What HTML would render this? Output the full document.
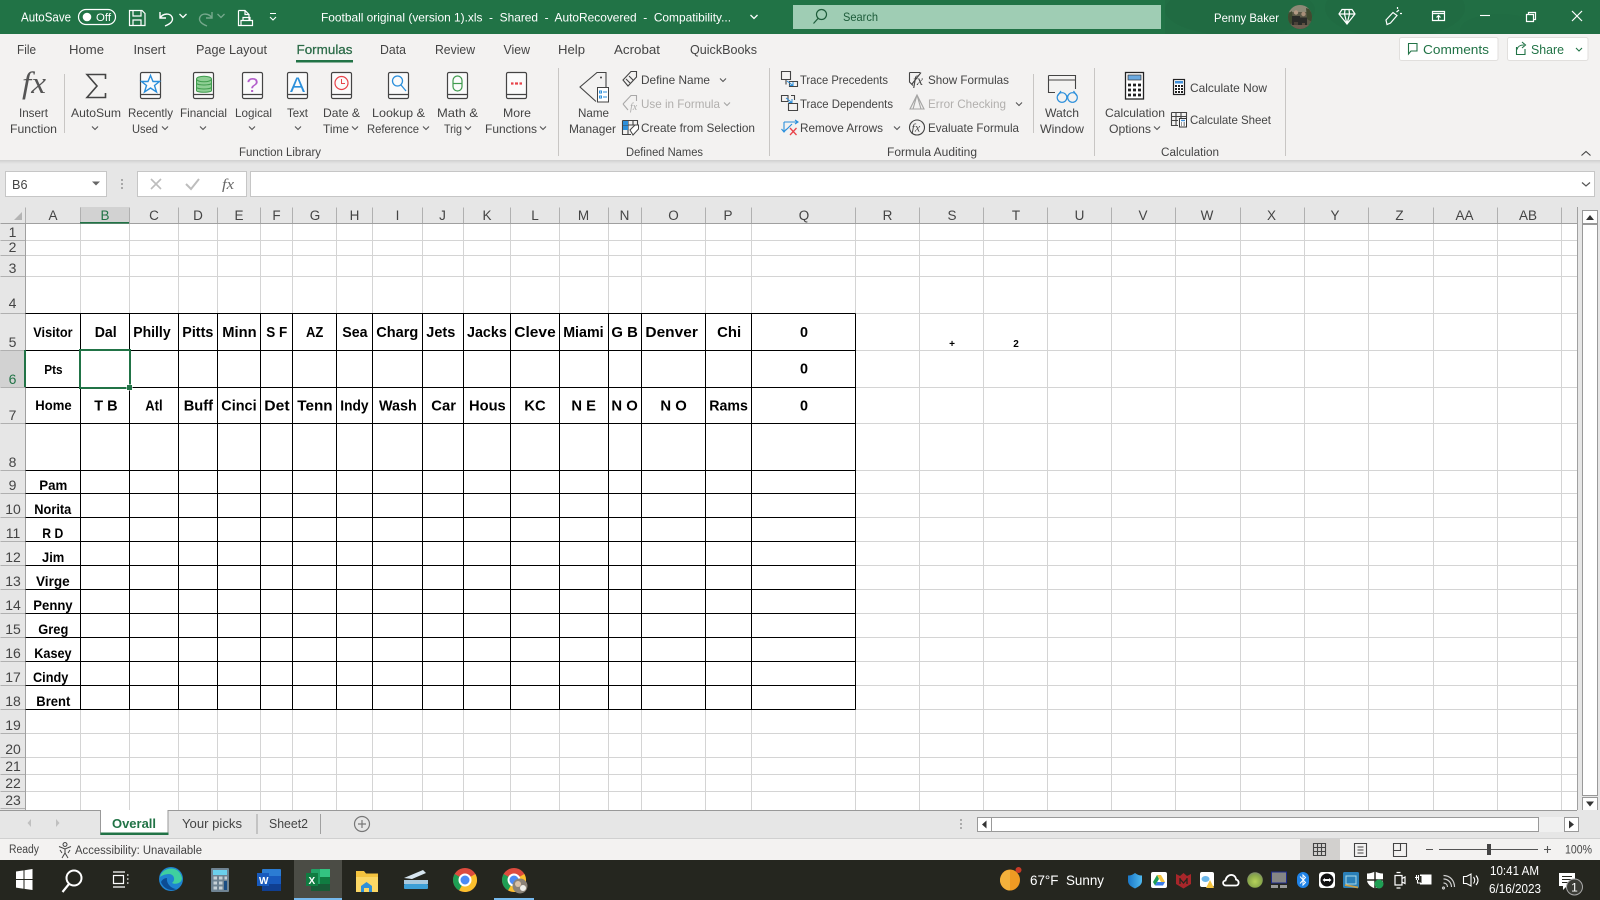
<!DOCTYPE html>
<html lang="en"><head><meta charset="utf-8"><title>Football original - Excel</title>
<style>
html,body{margin:0;padding:0;width:1600px;height:900px;overflow:hidden;background:#fff}
svg{display:block}
text{font-family:"Liberation Sans",sans-serif;white-space:pre}
.w{fill:#fff;font-size:12px}
.r{fill:#444;font-size:12px}
.d{fill:#b1afad;font-size:12px}
.g{fill:#444;font-size:11.5px}
.h{fill:#444;font-size:13.5px;text-anchor:middle}
.n{fill:#444;font-size:14px;text-anchor:middle}
.b{fill:#000;font-size:15px;font-weight:bold}
.a{fill:#000;font-size:14px;font-weight:bold}
.l{fill:none;stroke:#444;stroke-width:1.1}
.c{fill:none;stroke:#555;stroke-width:1.1}
.wl{fill:none;stroke:#fff;stroke-width:1.2}
</style></head><body>
<svg xmlns="http://www.w3.org/2000/svg" width="1600" height="900" viewBox="0 0 1600 900">
<defs>
<path id="ch" d="M-3 -1.5L0 1.5L3 -1.5" fill="none" stroke="#555" stroke-width="1.1"/>
<path id="chw" d="M-3.5 -2L0 1.5L3.5 -2" fill="none" stroke="#fff" stroke-width="1.3"/>
<g id="bk"><rect x=".5" y=".5" width="20" height="26" rx="1.5" fill="#fbfbfb" stroke="#444" stroke-width="1.2"/><path d="M.5 22.5H20.5" stroke="#444" stroke-width="1.2"/></g>
<linearGradient id="sh" x1="0" y1="0" x2="0" y2="1"><stop offset="0" stop-color="#cfcfcf"/><stop offset="1" stop-color="#e6e6e6"/></linearGradient>
<linearGradient id="sd" x1="0" y1="0" x2="1" y2="0"><stop offset="0" stop-color="#1a78c8"/><stop offset="1" stop-color="#4fb8ee"/></linearGradient>
<radialGradient id="gb" cx=".5" cy=".6" r=".6"><stop offset="0" stop-color="#b6d25a"/><stop offset=".7" stop-color="#8aa84a"/><stop offset="1" stop-color="#7d8a6d"/></radialGradient>
<clipPath id="av"><circle cx="1300" cy="17" r="12"/></clipPath>
</defs>

<!-- backgrounds -->
<rect width="1600" height="900" fill="#fff"/>
<rect width="1600" height="34" fill="#217346"/>
<rect x="1165" width="435" height="34" fill="#216e44"/>
<ellipse cx="1240" cy="10" rx="75" ry="26" fill="#206b42"/><ellipse cx="1395" cy="8" rx="70" ry="30" fill="#206b42"/><ellipse cx="1500" cy="30" rx="40" ry="16" fill="#206c43"/>
<rect y="34" width="1600" height="126" fill="#f3f2f1"/>
<rect y="160" width="1600" height="47" fill="#e6e6e6"/>
<rect y="160" width="1600" height="4" fill="url(#sh)"/>

<!-- title bar -->
<text class="w" x="21" y="21.5" textLength="50" lengthAdjust="spacingAndGlyphs" style="font-size:12.5px">AutoSave</text>
<rect x="78.5" y="9.5" width="37" height="15" rx="7.5" fill="none" stroke="#fff" stroke-width="1.2"/>
<circle cx="87" cy="17" r="4.3" fill="#fff"/>
<text class="w" x="96" y="21" textLength="15" lengthAdjust="spacingAndGlyphs" style="font-size:11px">Off</text>
<path class="wl" d="M129.5 10.5H142L145 13.5V25.5H129.5ZM133 10.5V16H141V10.5M133 25.5V20H141V25.5"/>
<path class="wl" style="stroke-width:1.4" d="M160 12V18H166M160 18C163 13 170 13 172 17C174 21 170 24 165 26"/>
<use href="#chw" x="183" y="16"/>
<g opacity=".38"><path class="wl" style="stroke-width:1.4" d="M212 12V18H206M212 18C209 13 202 13 200 17C198 21 202 24 207 26"/><use href="#chw" x="221" y="16"/></g>
<path class="wl" d="M238.5 10.5H245L249 14.5V21M245 10.5V14.5H249M238.5 10.5V25.5H241M241 20.5H252.5V25.5H241ZM243 20.5V17.5H250V20.5"/>
<path d="M270 13.5H276M270 17L273 20L276 17" fill="none" stroke="#fff" stroke-width="1.1"/>
<text class="w" x="321" y="21.5" textLength="410" lengthAdjust="spacingAndGlyphs">Football original (version 1).xls  -  Shared  -  AutoRecovered  -  Compatibility...</text>
<use href="#chw" x="754" y="17"/>
<rect x="793" y="5" width="368" height="24" fill="#9fcdb4"/>
<circle cx="821.5" cy="14.5" r="5" fill="none" stroke="#1d5c3a" stroke-width="1.2"/><path d="M818 18.5L813.5 23.5" stroke="#1d5c3a" stroke-width="1.2"/>
<text x="843" y="21" textLength="35" lengthAdjust="spacingAndGlyphs" style="font-size:12px;fill:#1d5c3a">Search</text>
<text class="w" x="1214" y="22" textLength="65" lengthAdjust="spacingAndGlyphs">Penny Baker</text>
<g clip-path="url(#av)">
<rect x="1288" y="5" width="24" height="24" fill="#5c5a48"/>
<rect x="1288" y="5" width="24" height="7" fill="#8d8a76"/>
<path d="M1306 8l6 2v12l-5-3zM1288 14l4-3 1 12-5 2z" fill="#3f4a2f"/>
<circle cx="1296" cy="12.500" r="2.200" fill="#b39a84"/><circle cx="1303.500" cy="14" r="2.200" fill="#a88f78"/>
<path d="M1292 16h8v13h-8zM1300 17.500h7V29h-7z" fill="#2a2b28"/>
<path d="M1294 22h4v7h-4z" fill="#4a4238"/><path d="M1302 23h3v6h-3z" fill="#5a4c3e"/>
<rect x="1288" y="25" width="24" height="4" fill="#6d5e50"/>
</g>
<path class="wl" d="M1342 9.500H1352L1355 14L1347 24L1339 14ZM1339 14H1355M1344.500 14L1347 24L1349.500 14M1344.500 14L1345 9.500M1349.500 14L1349 9.500"/>
<path class="wl" d="M1387 24.500L1386 20L1393 12.500L1397 15.500L1390.500 23ZM1396.500 12L1399 10M1397.500 9V7M1400 13.500H1402"/>
<path class="wl" d="M1432.500 11.500H1444.500V20.500H1432.500ZM1432.500 13.500H1444.500M1438.500 20V15.500M1436.500 17.500L1438.500 15.500L1440.500 17.500"/>
<path d="M1480 15.500H1490" stroke="#fff" stroke-width="1.1"/>
<path class="wl" d="M1526.500 14.500H1533.500V21.500H1526.500ZM1528.500 14.500V12.500H1535.500V19.500H1533.500"/>
<path class="wl" d="M1572 11L1582 21M1582 11L1572 21"/>

<!-- tabs -->
<text class="r" x="17" y="54" textLength="19" lengthAdjust="spacingAndGlyphs" style="font-size:13px">File</text>
<text class="r" x="69" y="54" textLength="35" lengthAdjust="spacingAndGlyphs" style="font-size:13px">Home</text>
<text class="r" x="133.500" y="54" textLength="32" lengthAdjust="spacingAndGlyphs" style="font-size:13px">Insert</text>
<text class="r" x="196" y="54" textLength="71" lengthAdjust="spacingAndGlyphs" style="font-size:13px">Page Layout</text>
<text x="296.500" y="54" textLength="56" lengthAdjust="spacingAndGlyphs" style="font-size:13px;fill:#2a6a47;stroke:#2a6a47;stroke-width:.25">Formulas</text>
<text class="r" x="380" y="54" textLength="26" lengthAdjust="spacingAndGlyphs" style="font-size:13px">Data</text>
<text class="r" x="435" y="54" textLength="40" lengthAdjust="spacingAndGlyphs" style="font-size:13px">Review</text>
<text class="r" x="503.500" y="54" textLength="26.500" lengthAdjust="spacingAndGlyphs" style="font-size:13px">View</text>
<text class="r" x="558" y="54" textLength="27" lengthAdjust="spacingAndGlyphs" style="font-size:13px">Help</text>
<text class="r" x="614" y="54" textLength="46" lengthAdjust="spacingAndGlyphs" style="font-size:13px">Acrobat</text>
<text class="r" x="690" y="54" textLength="67" lengthAdjust="spacingAndGlyphs" style="font-size:13px">QuickBooks</text>
<rect x="296" y="60" width="57" height="2.500" fill="#217346"/>
<rect x="1399.500" y="37.500" width="98.500" height="23" rx="2" fill="#fff" stroke="#e1dfdd"/>
<path d="M1408 43.500H1417V51H1411L1408.500 54V43.500Z" fill="none" stroke="#217346" stroke-width="1.100"/>
<text x="1423" y="54" textLength="66" lengthAdjust="spacingAndGlyphs" style="font-size:13px;fill:#217346">Comments</text>
<rect x="1507.500" y="37.500" width="80.500" height="23" rx="2" fill="#fff" stroke="#e1dfdd"/>
<path d="M1516.500 47V54.500H1525V49M1517 49.500C1518 45.500 1521 45 1524 45M1522 42L1525.500 45L1522 48" fill="none" stroke="#217346" stroke-width="1.100"/>
<text x="1531" y="54" textLength="33" lengthAdjust="spacingAndGlyphs" style="font-size:13px;fill:#217346">Share</text>
<path d="M1576 48L1579 51L1582 48" fill="none" stroke="#217346" stroke-width="1.100"/>

<!-- function library -->
<text x="22" y="93" textLength="24" lengthAdjust="spacingAndGlyphs" style="font-family:'Liberation Serif',serif;font-style:italic;font-size:31px;fill:#555">fx</text>
<text class="r" x="19" y="117" textLength="29" lengthAdjust="spacingAndGlyphs">Insert</text>
<text class="r" x="10" y="133" textLength="47" lengthAdjust="spacingAndGlyphs">Function</text>
<path d="M64.500 74V133M1033.500 74V133" stroke="#c8c6c4"/>
<path d="M105.500 79V74.500H87L97 86L87 97.500H105.500V93" fill="none" stroke="#444" stroke-width="1.600"/>
<text class="r" x="71" y="117" textLength="50" lengthAdjust="spacingAndGlyphs">AutoSum</text><use href="#ch" x="95" y="128"/>
<use href="#bk" x="140" y="72"/>
<path d="M150.500 75.500L153 81.500H159.500L154.500 85.500L156.500 92L150.500 88L144.500 92L146.500 85.500L141.500 81.500H148Z" fill="none" stroke="#2b8fdb" stroke-width="1.400"/>
<text class="r" x="128" y="117" textLength="45" lengthAdjust="spacingAndGlyphs">Recently</text>
<text class="r" x="132" y="133" textLength="26" lengthAdjust="spacingAndGlyphs">Used</text><use href="#ch" x="165" y="128"/>
<use href="#bk" x="193" y="72"/>
<g fill="#8fcf95" stroke="#3f9b4d" stroke-width="1"><path d="M196.500 79V90.500C196.500 92.800 211.500 92.800 211.500 90.500V79"/><ellipse cx="204" cy="79" rx="7.500" ry="2.800"/><path fill="none" d="M196.500 83C196.500 85.600 211.500 85.600 211.500 83M196.500 87C196.500 89.600 211.500 89.600 211.500 87"/></g>
<text class="r" x="180" y="117" textLength="47" lengthAdjust="spacingAndGlyphs">Financial</text><use href="#ch" x="203" y="128"/>
<use href="#bk" x="242" y="72"/>
<text x="246.500" y="92" textLength="12" lengthAdjust="spacingAndGlyphs" style="font-size:20px;fill:#b35fcb">?</text>
<text class="r" x="235" y="117" textLength="37" lengthAdjust="spacingAndGlyphs">Logical</text><use href="#ch" x="252" y="128"/>
<use href="#bk" x="287" y="72"/>
<text x="290" y="92" textLength="15" lengthAdjust="spacingAndGlyphs" style="font-size:21px;fill:#2b8fdb">A</text>
<text class="r" x="287" y="117" textLength="21" lengthAdjust="spacingAndGlyphs">Text</text><use href="#ch" x="298" y="128"/>
<use href="#bk" x="331" y="72"/>
<circle cx="341.500" cy="83" r="6.500" fill="none" stroke="#e8434a" stroke-width="1.200"/><path d="M341.500 79V83.500H345" fill="none" stroke="#e8434a"/>
<text class="r" x="323" y="117" textLength="37" lengthAdjust="spacingAndGlyphs">Date &amp;</text>
<text class="r" x="323" y="133" textLength="26" lengthAdjust="spacingAndGlyphs">Time</text><use href="#ch" x="355" y="128"/>
<use href="#bk" x="388" y="72"/>
<circle cx="397.500" cy="81" r="5" fill="none" stroke="#2b8fdb" stroke-width="1.300"/><path d="M401 85L406 91" stroke="#2b8fdb" stroke-width="1.300"/>
<text class="r" x="372" y="117" textLength="53" lengthAdjust="spacingAndGlyphs">Lookup &amp;</text>
<text class="r" x="367" y="133" textLength="52" lengthAdjust="spacingAndGlyphs">Reference</text><use href="#ch" x="426" y="128"/>
<use href="#bk" x="447" y="72"/>
<rect x="453" y="76" width="9" height="15" rx="4.500" fill="none" stroke="#3f9b4d" stroke-width="1.200"/><path d="M453 83.500H462" stroke="#3f9b4d" stroke-width="1.200"/>
<text class="r" x="437" y="117" textLength="41" lengthAdjust="spacingAndGlyphs">Math &amp;</text>
<text class="r" x="444" y="133" textLength="18" lengthAdjust="spacingAndGlyphs">Trig</text><use href="#ch" x="468" y="128"/>
<use href="#bk" x="506" y="72"/>
<path d="M511 83.500H513.500M515 83.500H518M519.500 83.500H522" stroke="#e8434a" stroke-width="2.200"/>
<text class="r" x="503" y="117" textLength="28" lengthAdjust="spacingAndGlyphs">More</text>
<text class="r" x="485" y="133" textLength="52" lengthAdjust="spacingAndGlyphs">Functions</text><use href="#ch" x="543" y="128"/>
<text class="g" x="239" y="156" textLength="82" lengthAdjust="spacingAndGlyphs">Function Library</text>
<path d="M558.500 68V156M769.500 68V156M1094.500 68V156M1285.500 68V156" stroke="#c8c6c4"/>

<!-- defined names -->
<path class="l" d="M606 87V72.500H597L580 87L596 101.500"/><circle cx="601" cy="77.500" r="1" fill="#444"/>
<rect x="597.500" y="87.500" width="11" height="14.500" fill="#fff" stroke="#444"/>
<path d="M599.500 91H601.500V93H599.500ZM599.500 96H601.500V98H599.500Z" fill="none" stroke="#2b8fdb"/><path d="M603 92H607M603 97H607" stroke="#2b8fdb"/>
<text class="r" x="578" y="117" textLength="31" lengthAdjust="spacingAndGlyphs">Name</text>
<text class="r" x="569" y="133" textLength="47" lengthAdjust="spacingAndGlyphs">Manager</text>
<path class="l" d="M623 80L631 71.500H636.500V77L628 86ZM626 79L630 83M629 76L633 80"/>
<text class="r" x="641" y="84" textLength="69" lengthAdjust="spacingAndGlyphs">Define Name</text><use href="#ch" x="723" y="80"/>
<g opacity=".42"><path class="l" d="M623 104L631 95.500H636.500V101M628 110L623 104"/><text x="630" y="110" style="font-family:'Liberation Serif',serif;font-style:italic;font-size:10px;fill:#444">fx</text></g>
<text class="d" x="641" y="108" textLength="79" lengthAdjust="spacingAndGlyphs">Use in Formula</text><use href="#ch" x="727" y="104" opacity=".5"/>
<path class="l" d="M622.500 120.500H637.500V126M622.500 120.500V134.500H631M622.500 125H637.500M628 120.500V134.500M633 120.500V125"/>
<rect x="623" y="125.500" width="5" height="4.500" fill="#2b8fdb"/><rect x="623" y="121" width="5" height="4" fill="#2b8fdb"/>
<path d="M630 130L635 125H638.500V129L633 135Z" fill="#fff" stroke="#444"/>
<text class="r" x="641" y="132" textLength="114" lengthAdjust="spacingAndGlyphs">Create from Selection</text>
<text class="g" x="626" y="156" textLength="77" lengthAdjust="spacingAndGlyphs">Defined Names</text>

<!-- formula auditing -->
<path class="l" d="M781.500 71.500H790.500V79.500H781.500ZM786 79.500V84.500M789.500 81.500H797.500V86.500H789.500Z"/><path d="M787 81L793 85.500M793 82V85.500H789.500" fill="none" stroke="#2b8fdb"/>
<text class="r" x="800" y="84" textLength="88" lengthAdjust="spacingAndGlyphs">Trace Precedents</text>
<path class="l" d="M781.500 95.500H788V101.500H781.500ZM791 95.500H794.500V100M788.500 103.500H797.500V110.500H788.500Z"/><path d="M786 98L792 102.500M792 99V102.500H788.500" fill="none" stroke="#2b8fdb"/>
<text class="r" x="800" y="108" textLength="93" lengthAdjust="spacingAndGlyphs">Trace Dependents</text>
<path d="M784 122V131M781.500 129L784 132L786.500 129M784 122H798M795 120L798 122L795 124M786 130L792 124" fill="none" stroke="#2b8fdb" stroke-width="1.100"/><path d="M790 128L796.500 135M796.500 128L790 135" stroke="#e8434a" stroke-width="1.300"/>
<text class="r" x="800" y="132" textLength="83" lengthAdjust="spacingAndGlyphs">Remove Arrows</text><use href="#ch" x="897" y="128"/>
<path class="l" d="M909.500 72.500H920M909.500 72.500V82L913 85.500M921 72.500L912 84"/><text x="913" y="85" style="font-family:'Liberation Serif',serif;font-style:italic;font-size:14px;fill:#444">fx</text>
<text class="r" x="928" y="84" textLength="81" lengthAdjust="spacingAndGlyphs">Show Formulas</text>
<g opacity=".45"><path class="l" d="M917 95L910 109H924ZM917 95L913 109M917 95L921 109"/></g>
<text class="d" x="928" y="108" textLength="78" lengthAdjust="spacingAndGlyphs">Error Checking</text><use href="#ch" x="1019" y="104"/>
<circle cx="917" cy="127.500" r="7.500" class="l"/><text x="911.500" y="131.500" style="font-family:'Liberation Serif',serif;font-style:italic;font-size:12px;fill:#444">fx</text>
<text class="r" x="928" y="132" textLength="91" lengthAdjust="spacingAndGlyphs">Evaluate Formula</text>
<text class="g" x="887" y="156" textLength="90" lengthAdjust="spacingAndGlyphs">Formula Auditing</text>
<path class="l" d="M1048.500 75.500H1075.500V89M1048.500 80H1075.500M1048.500 75.500V92.500H1055"/>
<g fill="none" stroke="#2b8fdb" stroke-width="1.200"><circle cx="1062" cy="97.500" r="4.800"/><circle cx="1072.500" cy="97.500" r="4.800"/><path d="M1066.500 96H1068M1057.500 96L1061 91M1077 96L1073.500 91"/></g>
<text class="r" x="1045" y="117" textLength="34" lengthAdjust="spacingAndGlyphs">Watch</text>
<text class="r" x="1040" y="133" textLength="44" lengthAdjust="spacingAndGlyphs">Window</text>

<!-- calculation -->
<rect x="1125.500" y="72.500" width="18" height="26.500" fill="#fff" stroke="#222" stroke-width="1.300"/>
<rect x="1128" y="75" width="13" height="5" fill="#6aa9e0" stroke="#333" stroke-width=".7"/>
<path d="M1128 85H1131M1133 85H1136M1138 85H1141M1128 90H1131M1133 90H1136M1138 90H1141M1128 95H1131M1133 95H1136M1138 95H1141" stroke="#222" stroke-width="2.800"/>
<rect x="1173.500" y="79.500" width="11" height="15" fill="#fff" stroke="#222" stroke-width="1.200"/><rect x="1175" y="81" width="8" height="2.500" fill="#3f8fd8"/>
<path d="M1175 86H1177M1178 86H1180M1181 86H1183M1175 89H1177M1178 89H1180M1181 89H1183M1175 92H1177M1178 92H1180M1181 92H1183" stroke="#222" stroke-width="2"/>
<text class="r" x="1105" y="117" textLength="60" lengthAdjust="spacingAndGlyphs">Calculation</text>
<text class="r" x="1109" y="133" textLength="42" lengthAdjust="spacingAndGlyphs">Options</text><use href="#ch" x="1157" y="128"/>
<text class="r" x="1190" y="92" textLength="77" lengthAdjust="spacingAndGlyphs">Calculate Now</text>
<path class="l" d="M1171.500 112.500H1186.500V118M1171.500 112.500V125.500H1178M1171.500 116.500H1186.500M1171.500 120.500H1178M1176 112.500V125.500M1181 112.500V118"/>
<rect x="1179.500" y="118.500" width="7" height="8.500" fill="#fff" stroke="#333"/><path d="M1181 120.500H1185" stroke="#3f8fd8" stroke-width="1.400"/><path d="M1181 123H1182M1183.500 123H1185M1181 125H1182M1183.500 125H1185" stroke="#333"/>
<text class="r" x="1190" y="124" textLength="81" lengthAdjust="spacingAndGlyphs">Calculate Sheet</text>
<text class="g" x="1161" y="156" textLength="58" lengthAdjust="spacingAndGlyphs">Calculation</text>
<path d="M1581.500 155.500L1586 151.500L1590.500 155.500" fill="none" stroke="#444" stroke-width="1.100"/>

<!-- formula bar -->
<rect x="5.500" y="171.500" width="101" height="25" fill="#fff" stroke="#c6c6c6"/>
<text x="12" y="189" style="font-size:13px;fill:#444" textLength="15.500" lengthAdjust="spacingAndGlyphs">B6</text>
<path d="M92 181.500H100L96 185.500Z" fill="#666"/>
<path d="M122 179v2M122 183v2M122 187v2" stroke="#999" stroke-width="1.600"/>
<rect x="137.500" y="171.500" width="109" height="25" fill="#fff" stroke="#c6c6c6"/>
<path d="M151 179L161 189M161 179L151 189" stroke="#bdbdbd" stroke-width="1.600"/>
<path d="M186 184L191 189L199 179" fill="none" stroke="#bdbdbd" stroke-width="2"/>
<text x="222" y="189" textLength="12" lengthAdjust="spacingAndGlyphs" style="font-family:'Liberation Serif',serif;font-style:italic;font-size:15px;fill:#666">fx</text>
<rect x="250.500" y="171.500" width="1344" height="25" fill="#fff" stroke="#c6c6c6"/>
<path d="M1582 182.500L1586 186L1590 182.500" fill="none" stroke="#555" stroke-width="1.200"/>

<!-- headers -->
<rect y="207" width="1600" height="16" fill="#e6e6e6"/>
<rect y="223" width="25" height="587" fill="#e6e6e6"/>
<rect x="80" y="207" width="49" height="16" fill="#d2d2d2"/>
<rect y="350" width="25" height="37" fill="#d2d2d2"/>
<path d="M22 212V220H14Z" fill="#b4b4b4"/>
<g transform="translate(.5 .5)" shape-rendering="crispEdges">
<path fill="none" stroke="#d4d4d4" d="M80 223V810M129 223V810M178 223V810M217 223V810M260 223V810M292 223V810M336 223V810M372 223V810M422 223V810M463 223V810M510 223V810M559 223V810M608 223V810M641 223V810M705 223V810M751 223V810M855 223V810M919 223V810M983 223V810M1047 223V810M1111 223V810M1175 223V810M1240 223V810M1304 223V810M1368 223V810M1433 223V810M1497 223V810M1561 223V810
M25 240H1577M25 255H1577M25 276H1577M25 313H1577M25 350H1577M25 387H1577M25 423H1577M25 470H1577M25 493H1577M25 517H1577M25 541H1577M25 565H1577M25 589H1577M25 613H1577M25 637H1577M25 661H1577M25 685H1577M25 709H1577M25 733H1577M25 757H1577M25 774H1577M25 791H1577"/>
<path fill="none" stroke="#b0b0b0" d="M25 207V223M80 207V223M129 207V223M178 207V223M217 207V223M260 207V223M292 207V223M336 207V223M372 207V223M422 207V223M463 207V223M510 207V223M559 207V223M608 207V223M641 207V223M705 207V223M751 207V223M855 207V223M919 207V223M983 207V223M1047 207V223M1111 207V223M1175 207V223M1240 207V223M1304 207V223M1368 207V223M1433 207V223M1497 207V223M1561 207V223
M0 240H25M0 255H25M0 276H25M0 313H25M0 350H25M0 387H25M0 423H25M0 470H25M0 493H25M0 517H25M0 541H25M0 565H25M0 589H25M0 613H25M0 637H25M0 661H25M0 685H25M0 709H25M0 733H25M0 757H25M0 774H25M0 791H25M0 808H25"/>
<path fill="none" stroke="#a0a0a0" d="M0 223H1577M25 223V810"/>
<path fill="none" stroke="#000" d="M80 313V709M129 313V709M178 313V709M217 313V709M260 313V709M292 313V709M336 313V709M372 313V709M422 313V709M463 313V709M510 313V709M559 313V709M608 313V709M641 313V709M705 313V709M751 313V709M855 313V709
M25 313H855M25 350H855M25 387H855M25 423H855M25 470H855M25 493H855M25 517H855M25 541H855M25 565H855M25 589H855M25 613H855M25 637H855M25 661H855M25 685H855M25 709H855"/>
</g>
<rect x="80" y="222" width="49" height="1.600" fill="#217346"/>
<rect x="24" y="350" width="2" height="37" fill="#217346"/>
<rect x="80" y="350" width="50" height="38" fill="none" stroke="#217346" stroke-width="2"/>
<rect x="126.500" y="384.500" width="6" height="6" fill="#fff"/><rect x="127" y="385" width="5" height="5" fill="#217346"/>

<!-- col letters -->
<text class="h" x="53" y="220">A</text><text class="h" x="105" y="220" style="fill:#217346">B</text><text class="h" x="154" y="220">C</text><text class="h" x="198" y="220">D</text><text class="h" x="239" y="220">E</text><text class="h" x="276.500" y="220">F</text><text class="h" x="315" y="220">G</text><text class="h" x="354.500" y="220">H</text><text class="h" x="397.500" y="220">I</text><text class="h" x="442.500" y="220">J</text><text class="h" x="487" y="220">K</text><text class="h" x="535" y="220">L</text><text class="h" x="583.500" y="220">M</text><text class="h" x="624.500" y="220">N</text><text class="h" x="673.500" y="220">O</text><text class="h" x="728" y="220">P</text><text class="h" x="804" y="220">Q</text><text class="h" x="887.500" y="220">R</text><text class="h" x="952" y="220">S</text><text class="h" x="1016" y="220">T</text><text class="h" x="1079.500" y="220">U</text><text class="h" x="1143" y="220">V</text><text class="h" x="1207" y="220">W</text><text class="h" x="1271.500" y="220">X</text><text class="h" x="1335" y="220">Y</text><text class="h" x="1399.500" y="220">Z</text><text class="h" x="1464.500" y="220">AA</text><text class="h" x="1528" y="220">AB</text>

<!-- row numbers -->
<text class="n" x="12.500" y="237">1</text><text class="n" x="12.500" y="252">2</text><text class="n" x="12.500" y="273">3</text><text class="n" x="12.500" y="308">4</text><text class="n" x="12.500" y="347">5</text><text class="n" x="12.500" y="384" style="fill:#217346">6</text><text class="n" x="12.500" y="420">7</text><text class="n" x="12.500" y="467">8</text><text class="n" x="12.500" y="490">9</text>
<text class="n" x="13" y="514">10</text><text class="n" x="13" y="538">11</text><text class="n" x="13" y="562">12</text><text class="n" x="13" y="586">13</text><text class="n" x="13" y="610">14</text><text class="n" x="13" y="634">15</text><text class="n" x="13" y="658">16</text><text class="n" x="13" y="682">17</text><text class="n" x="13" y="706">18</text><text class="n" x="13" y="730">19</text><text class="n" x="13" y="754">20</text><text class="n" x="13" y="771">21</text><text class="n" x="13" y="788">22</text><text class="n" x="13" y="805">23</text>

<!-- cells -->
<text class="a" x="33.300" y="337" textLength="39.300" lengthAdjust="spacingAndGlyphs">Visitor</text><text class="a" x="44.300" y="374" textLength="18.300" lengthAdjust="spacingAndGlyphs" style="font-size:13px">Pts</text><text class="a" x="35.300" y="410" textLength="36.300" lengthAdjust="spacingAndGlyphs">Home</text>
<text class="b" x="94.700" y="337" textLength="22" lengthAdjust="spacingAndGlyphs">Dal</text><text class="b" x="133.300" y="337" textLength="37.300" lengthAdjust="spacingAndGlyphs">Philly</text><text class="b" x="182.300" y="337" textLength="31" lengthAdjust="spacingAndGlyphs">Pitts</text><text class="b" x="222.300" y="337" textLength="34.300" lengthAdjust="spacingAndGlyphs">Minn</text><text class="b" x="266.300" y="337" textLength="21" lengthAdjust="spacingAndGlyphs">S F</text><text class="b" x="306" y="337" textLength="17.300" lengthAdjust="spacingAndGlyphs">AZ</text><text class="b" x="342.300" y="337" textLength="25.300" lengthAdjust="spacingAndGlyphs">Sea</text><text class="b" x="376.300" y="337" textLength="42" lengthAdjust="spacingAndGlyphs">Charg</text><text class="b" x="426.300" y="337" textLength="29" lengthAdjust="spacingAndGlyphs">Jets</text><text class="b" x="467" y="337" textLength="39.800" lengthAdjust="spacingAndGlyphs">Jacks</text><text class="b" x="514.300" y="337" textLength="41.400" lengthAdjust="spacingAndGlyphs">Cleve</text><text class="b" x="563.200" y="337" textLength="40.400" lengthAdjust="spacingAndGlyphs">Miami</text><text class="b" x="611.400" y="337" textLength="26.400" lengthAdjust="spacingAndGlyphs">G B</text><text class="b" x="645.400" y="337" textLength="52.500" lengthAdjust="spacingAndGlyphs">Denver</text><text class="b" x="717.100" y="337" textLength="24" lengthAdjust="spacingAndGlyphs">Chi</text><text class="b" x="800" y="337" textLength="8" lengthAdjust="spacingAndGlyphs">0</text>
<text class="b" x="800" y="373.500" textLength="8" lengthAdjust="spacingAndGlyphs">0</text>
<text class="b" x="94.300" y="410.500" textLength="23.300" lengthAdjust="spacingAndGlyphs">T B</text><text class="b" x="145.300" y="410.500" textLength="17.300" lengthAdjust="spacingAndGlyphs">Atl</text><text class="b" x="183.700" y="410.500" textLength="29.300" lengthAdjust="spacingAndGlyphs">Buff</text><text class="b" x="221.300" y="410.500" textLength="35.300" lengthAdjust="spacingAndGlyphs">Cinci</text><text class="b" x="264.300" y="410.500" textLength="25.300" lengthAdjust="spacingAndGlyphs">Det</text><text class="b" x="297.300" y="410.500" textLength="35.300" lengthAdjust="spacingAndGlyphs">Tenn</text><text class="b" x="340.300" y="410.500" textLength="28.300" lengthAdjust="spacingAndGlyphs">Indy</text><text class="b" x="379" y="410.500" textLength="37.700" lengthAdjust="spacingAndGlyphs">Wash</text><text class="b" x="431.300" y="410.500" textLength="24.700" lengthAdjust="spacingAndGlyphs">Car</text><text class="b" x="469" y="410.500" textLength="36.700" lengthAdjust="spacingAndGlyphs">Hous</text><text class="b" x="524.300" y="410.500" textLength="21.400" lengthAdjust="spacingAndGlyphs">KC</text><text class="b" x="571.400" y="410.500" textLength="24.600" lengthAdjust="spacingAndGlyphs">N E</text><text class="b" x="611.400" y="410.500" textLength="26.400" lengthAdjust="spacingAndGlyphs">N O</text><text class="b" x="660.400" y="410.500" textLength="26.400" lengthAdjust="spacingAndGlyphs">N O</text><text class="b" x="709.300" y="410.500" textLength="38.600" lengthAdjust="spacingAndGlyphs">Rams</text><text class="b" x="800" y="410.500" textLength="8" lengthAdjust="spacingAndGlyphs">0</text>
<text class="a" x="39.300" y="490" textLength="28" lengthAdjust="spacingAndGlyphs">Pam</text><text class="a" x="34.300" y="514" textLength="37" lengthAdjust="spacingAndGlyphs">Norita</text><text class="a" x="42.300" y="538" textLength="21" lengthAdjust="spacingAndGlyphs">R D</text><text class="a" x="42" y="562" textLength="22.300" lengthAdjust="spacingAndGlyphs">Jim</text><text class="a" x="36" y="586" textLength="33.700" lengthAdjust="spacingAndGlyphs">Virge</text><text class="a" x="33.300" y="610" textLength="39.300" lengthAdjust="spacingAndGlyphs">Penny</text><text class="a" x="38.300" y="634" textLength="30" lengthAdjust="spacingAndGlyphs">Greg</text><text class="a" x="34.300" y="658" textLength="37.300" lengthAdjust="spacingAndGlyphs">Kasey</text><text class="a" x="33" y="682" textLength="35.300" lengthAdjust="spacingAndGlyphs">Cindy</text><text class="a" x="36.300" y="706" textLength="34" lengthAdjust="spacingAndGlyphs">Brent</text>
<text x="952" y="347" text-anchor="middle" style="font-size:10px;font-weight:bold;fill:#000">+</text>
<text x="1016" y="347" text-anchor="middle" style="font-size:10px;font-weight:bold;fill:#000">2</text>

<!-- vertical scrollbar -->
<rect x="1577" y="207" width="23" height="603" fill="#e6e6e6"/>
<path d="M1577.500 207V810" stroke="#a0a0a0"/>
<rect x="1582.500" y="210.500" width="15" height="13" fill="#fff" stroke="#999"/><path d="M1586 220L1590 215L1594 220Z" fill="#333"/>
<rect x="1582.500" y="224.500" width="15" height="571" fill="#fff" stroke="#999"/>
<rect x="1582.500" y="797.500" width="15" height="13" fill="#fff" stroke="#999"/><path d="M1586 801.500L1594 801.500L1590 806.500Z" fill="#333"/>

<!-- sheet tabs -->
<rect y="810" width="1600" height="29" fill="#e6e6e6"/>
<path d="M0 810.500H1577" stroke="#999"/>
<path d="M0 838.500H1600" stroke="#d0d0d0"/>
<path d="M31 819L27.500 823L31 827Z" fill="#c0c0c0"/><path d="M56 819L59.500 823L56 827Z" fill="#c0c0c0"/>
<rect x="100.500" y="810" width="67.500" height="25" fill="#fff"/>
<path d="M100.500 810V835M168 810V835" stroke="#999"/>
<rect x="100.500" y="832.500" width="68" height="2.500" fill="#217346"/>
<text x="112" y="828" textLength="44" lengthAdjust="spacingAndGlyphs" style="font-size:13px;font-weight:bold;fill:#217346">Overall</text>
<text class="r" x="182" y="828" textLength="60" lengthAdjust="spacingAndGlyphs" style="font-size:13px">Your picks</text>
<path d="M257 814V834M320.500 814V834" stroke="#a0a0a0"/>
<text class="r" x="269" y="828" textLength="39" lengthAdjust="spacingAndGlyphs" style="font-size:13px">Sheet2</text>
<circle cx="362" cy="824" r="7.500" fill="none" stroke="#777" stroke-width="1.200"/><path d="M358 824H366M362 820V828" stroke="#777" stroke-width="1.200"/>
<path d="M961 819v2M961 823v2M961 827v2" stroke="#a5a5a5" stroke-width="1.800"/>
<rect x="1538" y="817" width="26" height="15" fill="#f0f0f0"/>
<rect x="977.500" y="817.500" width="14" height="14" fill="#fff" stroke="#999"/><path d="M986.500 820.500V828.500L982 824.500Z" fill="#333"/>
<rect x="991.500" y="817.500" width="547" height="14" fill="#fff" stroke="#999"/>
<rect x="1564.500" y="817.500" width="14" height="14" fill="#fff" stroke="#999"/><path d="M1569 820.500V828.500L1574 824.500Z" fill="#333"/>

<!-- status bar -->
<rect y="839" width="1600" height="21" fill="#f3f2f1"/>
<text class="r" x="9" y="853" textLength="30" lengthAdjust="spacingAndGlyphs" style="font-size:11.500px">Ready</text>
<path d="M65 842.500a2 2 0 1 0 .01 0M59 846.500L65 849L71 846.500M65 849V853M62 858L65 853L68 858M60 850L62 853M70 850L68 853" fill="none" stroke="#444"/>
<text class="r" x="75" y="854" textLength="127" lengthAdjust="spacingAndGlyphs" style="font-size:11.500px">Accessibility: Unavailable</text>
<rect x="1300" y="839" width="40" height="21" fill="#d2d0ce"/>
<path class="l" d="M1313.500 843.500H1325.500V855.500H1313.500ZM1317.500 843.500V855.500M1321.500 843.500V855.500M1313.500 847.500H1325.500M1313.500 851.500H1325.500"/>
<path class="l" d="M1354.500 843.500H1366.500V856.500H1354.500ZM1357.500 847H1363.500M1357.500 850H1363.500M1357.500 853H1363.500"/>
<path class="l" d="M1393.500 843.500H1406.500V856.500H1393.500ZM1400.500 843.500V850.500H1393.500"/>
<path d="M1426 849.500H1433M1544 849.500H1551M1547.500 846V853M1439 849.500H1538" stroke="#555" stroke-width="1.100"/>
<rect x="1487" y="844" width="4" height="11" fill="#444"/>
<text class="r" x="1565" y="853.500" textLength="27" lengthAdjust="spacingAndGlyphs" style="font-size:11.500px">100%</text>

<!-- taskbar -->
<rect y="860" width="1600" height="40" fill="#25261f"/>
<path d="M16 871.500L23.500 870.400V879H16ZM24.500 870.200L32.500 869V879H24.500ZM16 880H23.500V888.700L16 887.600ZM24.500 880H32.500V890L24.500 888.900Z" fill="#fff"/>
<circle cx="74" cy="878" r="7.500" fill="none" stroke="#fff" stroke-width="2"/><path d="M69 884L62.500 892" stroke="#fff" stroke-width="2.200"/>
<path d="M113 872H125M113 887H125M113.500 875.500H123.500V883.500H113.500ZM127 875H128.500M127 879H128.500M127 883H128.500" fill="none" stroke="#fff" stroke-width="1.200"/>
<circle cx="171" cy="879" r="12" fill="#1f83d0"/><path d="M160 877C162 867 179 864 182 878C182 883 176 885 172 883C176 880 174 874 169 874C165 874 161 876 160 877Z" fill="#3fcf9f"/><path d="M161 882C163 888 170 892 177 889C172 889 166 884 167 878C164 878 162 880 161 882Z" fill="#0c4c93"/>
<rect x="211" y="868" width="18" height="24" rx="1" fill="#6f8392"/><rect x="213" y="870" width="14" height="5" fill="#6bd0ec"/>
<path d="M213.500 878H217M219 878H222.500M224.500 878H227M213.500 883H217M219 883H222.500M213.500 888H217M219 888H222.500" stroke="#c6d0d6" stroke-width="3"/><path d="M225.500 881V890" stroke="#1a4d83" stroke-width="3"/>
<rect x="262" y="869" width="19" height="22" rx="1" fill="#2b7cd3"/><rect x="262" y="876" width="19" height="8" fill="#185abd"/><rect x="262" y="884" width="19" height="7" fill="#103f91"/>
<rect x="257" y="873" width="12" height="13" fill="#185abd"/>
<text x="259" y="884" style="font-size:10px;font-weight:bold;fill:#fff">W</text>
<rect x="294" y="860" width="48" height="40" fill="#4b4c45"/>
<rect x="294" y="898" width="48" height="2" fill="#76b9ed"/>
<rect x="311" y="869" width="19" height="22" rx="1" fill="#21a366"/><rect x="320" y="869" width="10" height="8" fill="#33c481"/><rect x="311" y="884" width="19" height="7" fill="#185c37"/><rect x="320" y="877" width="10" height="7" fill="#107c41"/>
<rect x="306" y="873" width="12" height="13" fill="#107c41"/>
<text x="308.500" y="884" style="font-size:10px;font-weight:bold;fill:#fff">X</text>
<path d="M356 871H364L366 873.500H378V892H356Z" fill="#f4c33f"/><path d="M356 877H378V892H356Z" fill="#fbd765"/><path d="M361 892V886L366.500 882L372 886V892H369V888H364V892Z" fill="#2e8fd8"/>
<path d="M404 878L423 870L426 873L412 879Z" fill="#d7e5ef"/><rect x="404" y="880" width="24" height="4" fill="#a9c9de"/><rect x="404" y="884" width="24" height="5" rx="1" fill="#3d9fd6"/>
<circle cx="465" cy="880" r="12" fill="#dd4b3e"/><path d="M465 880L475.400 874A12 12 0 0 1 459 890.400Z" fill="#fbc02d"/><path d="M465 880L459 890.400A12 12 0 0 1 454.600 874Z" fill="#1e9e54"/><circle cx="465" cy="880" r="5.500" fill="#4c8bf5" stroke="#fff" stroke-width="2"/>
<circle cx="514" cy="880" r="12" fill="#dd4b3e"/><path d="M514 880L524.400 874A12 12 0 0 1 508 890.400Z" fill="#fbc02d"/><path d="M514 880L508 890.400A12 12 0 0 1 503.600 874Z" fill="#1e9e54"/><circle cx="514" cy="880" r="5.500" fill="#4c8bf5" stroke="#fff" stroke-width="2"/>
<circle cx="520" cy="886" r="7.500" fill="#8b8378"/><circle cx="518" cy="884" r="3" fill="#d9c2a8"/><circle cx="523" cy="888" r="3" fill="#efefe9"/>
<rect x="494" y="898" width="40" height="2" fill="#76b9ed"/>

<ellipse cx="1010" cy="880" rx="10" ry="10.500" fill="#ef9a23"/><path d="M1010 870C1002 870 1000 878 1000 880C1000 886 1005 890.500 1010 890.500Z" fill="#f3b13c"/><circle cx="1018.500" cy="870" r="3" fill="#c93a26"/>
<text class="w" x="1030" y="885" textLength="74" lengthAdjust="spacingAndGlyphs" style="font-size:14px">67°F  Sunny</text>

<!-- tray -->
<path d="M1128 875.500C1131 875.500 1133 874.500 1135 873C1137 874.500 1139 875.500 1142 875.500V881C1142 885 1138 887 1135 888.500C1132 887 1128 885 1128 881Z" fill="url(#sd)"/>
<rect x="1151" y="872" width="16" height="16" rx="2" fill="#fff"/><path d="M1157 875H1161L1165 882H1161Z" fill="#f4c33f"/><path d="M1157 875L1153 882L1155 885.500L1159 879Z" fill="#1e9e54"/><path d="M1155 885.500H1163L1165 882H1157Z" fill="#3b7de8"/>
<path d="M1176 874L1180 876L1183.500 873L1187 876L1191 874V884L1183.500 888.500L1176 884Z" fill="#a8262a"/><path d="M1180 878V884M1187 878V884M1180 879L1183.500 883L1187 879" fill="none" stroke="#25261f" stroke-width="1.300"/>
<rect x="1200" y="872" width="14" height="15" rx="2" fill="#fff"/><ellipse cx="1205.500" cy="879" rx="4" ry="3" fill="#6bb7ea"/><path d="M1206 888L1210 880L1214 888Z" fill="#f4c33f"/>
<path d="M1226 885.500C1222.500 885.500 1222 881 1225.500 880.500C1226 877 1229 874.500 1232 875C1235 875.500 1236 878 1236 879.500C1239.500 880.500 1239.500 885.500 1236 885.500Z" fill="#25261f" stroke="#fff" stroke-width="1.800"/>
<circle cx="1255" cy="880" r="7.800" fill="url(#gb)"/>
<rect x="1271.500" y="872" width="15" height="11" fill="#858585" stroke="#1e2a8a"/><rect x="1271" y="885" width="7" height="3" fill="#999"/><rect x="1280" y="885" width="7" height="3" fill="#999"/>
<rect x="1297" y="872" width="12" height="16" rx="6" fill="#1f83e8"/><path d="M1300 876.500L1305.500 882.500L1303 885V875L1305.500 877.500L1300 883.500" fill="none" stroke="#fff"/>
<rect x="1319" y="872" width="16" height="16" rx="3" fill="#fff"/><circle cx="1327" cy="880" r="6.500" fill="#111"/><path d="M1322.500 880L1325 878V879H1329V878L1331.500 880L1329 882V881H1325V882Z" fill="#fff"/>
<rect x="1343" y="872" width="16" height="16" rx="1.500" fill="#2a7fb8"/><path d="M1346 876H1356V884H1346Z" fill="none" stroke="#a8d9e8"/><path d="M1345 885L1358 887.500" stroke="#c9a04b" stroke-width="1.800"/>
<path d="M1367 873.500C1370 873.500 1373 872.500 1375 871.500C1377 872.500 1380 873.500 1383 873.500V880C1383 884 1379 887 1375 888.500C1371 887 1367 884 1367 880Z" fill="#fff"/><path d="M1375 871.500V888.500M1367 880H1383" stroke="#25261f" stroke-width="1.500"/><circle cx="1379" cy="884" r="4.500" fill="#1f9e54"/>
<path class="wl" d="M1395 875.500H1402V885H1395ZM1402 878.500L1405 877V883.500L1402 882M1396.500 872.500H1400.500M1396.500 888H1400.500"/>
<rect x="1420.500" y="875" width="10.500" height="9" fill="#fff" stroke="#fff"/><rect x="1419.500" y="876" width="2" height="7" fill="#25261f"/>
<path d="M1415 877.500H1419M1416.500 875V880M1418.500 875V880M1417.500 880V883H1421" fill="none" stroke="#fff" stroke-width="1.100"/>
<path d="M1443.500 887a1 1 0 1 0 .01 0M1443.500 883c2.500 0 4 1.700 4 4M1443.500 879c4.500 0 8 3.500 8 8M1443.500 875.500c6.500 0 11 5 11 11.500" fill="none" stroke="#cfcfcf" stroke-width="1.200"/>
<path d="M1463.500 876.500H1466.500L1471 874V886L1466.500 883.500H1463.500ZM1473.500 877C1475 879 1475 881.500 1473.500 883.500M1476 875.500C1478.500 878.500 1478.500 882 1476 885" fill="none" stroke="#fff" stroke-width="1.100"/>
<text class="w" x="1490" y="875" textLength="49" lengthAdjust="spacingAndGlyphs" style="font-size:12.500px">10:41 AM</text>
<text class="w" x="1489" y="893" textLength="52" lengthAdjust="spacingAndGlyphs" style="font-size:12.500px">6/16/2023</text>
<path d="M1559 873H1575V886H1567L1563 890V886H1559Z" fill="#fff"/><path d="M1562 876.500H1572M1562 879.500H1572M1562 882.500H1568" stroke="#25261f"/>
<circle cx="1574.500" cy="887" r="8" fill="#3b3c36" stroke="#aaa"/>
<text x="1574.500" y="891.500" text-anchor="middle" style="font-size:12px;fill:#fff">1</text>
</svg>
</body></html>
